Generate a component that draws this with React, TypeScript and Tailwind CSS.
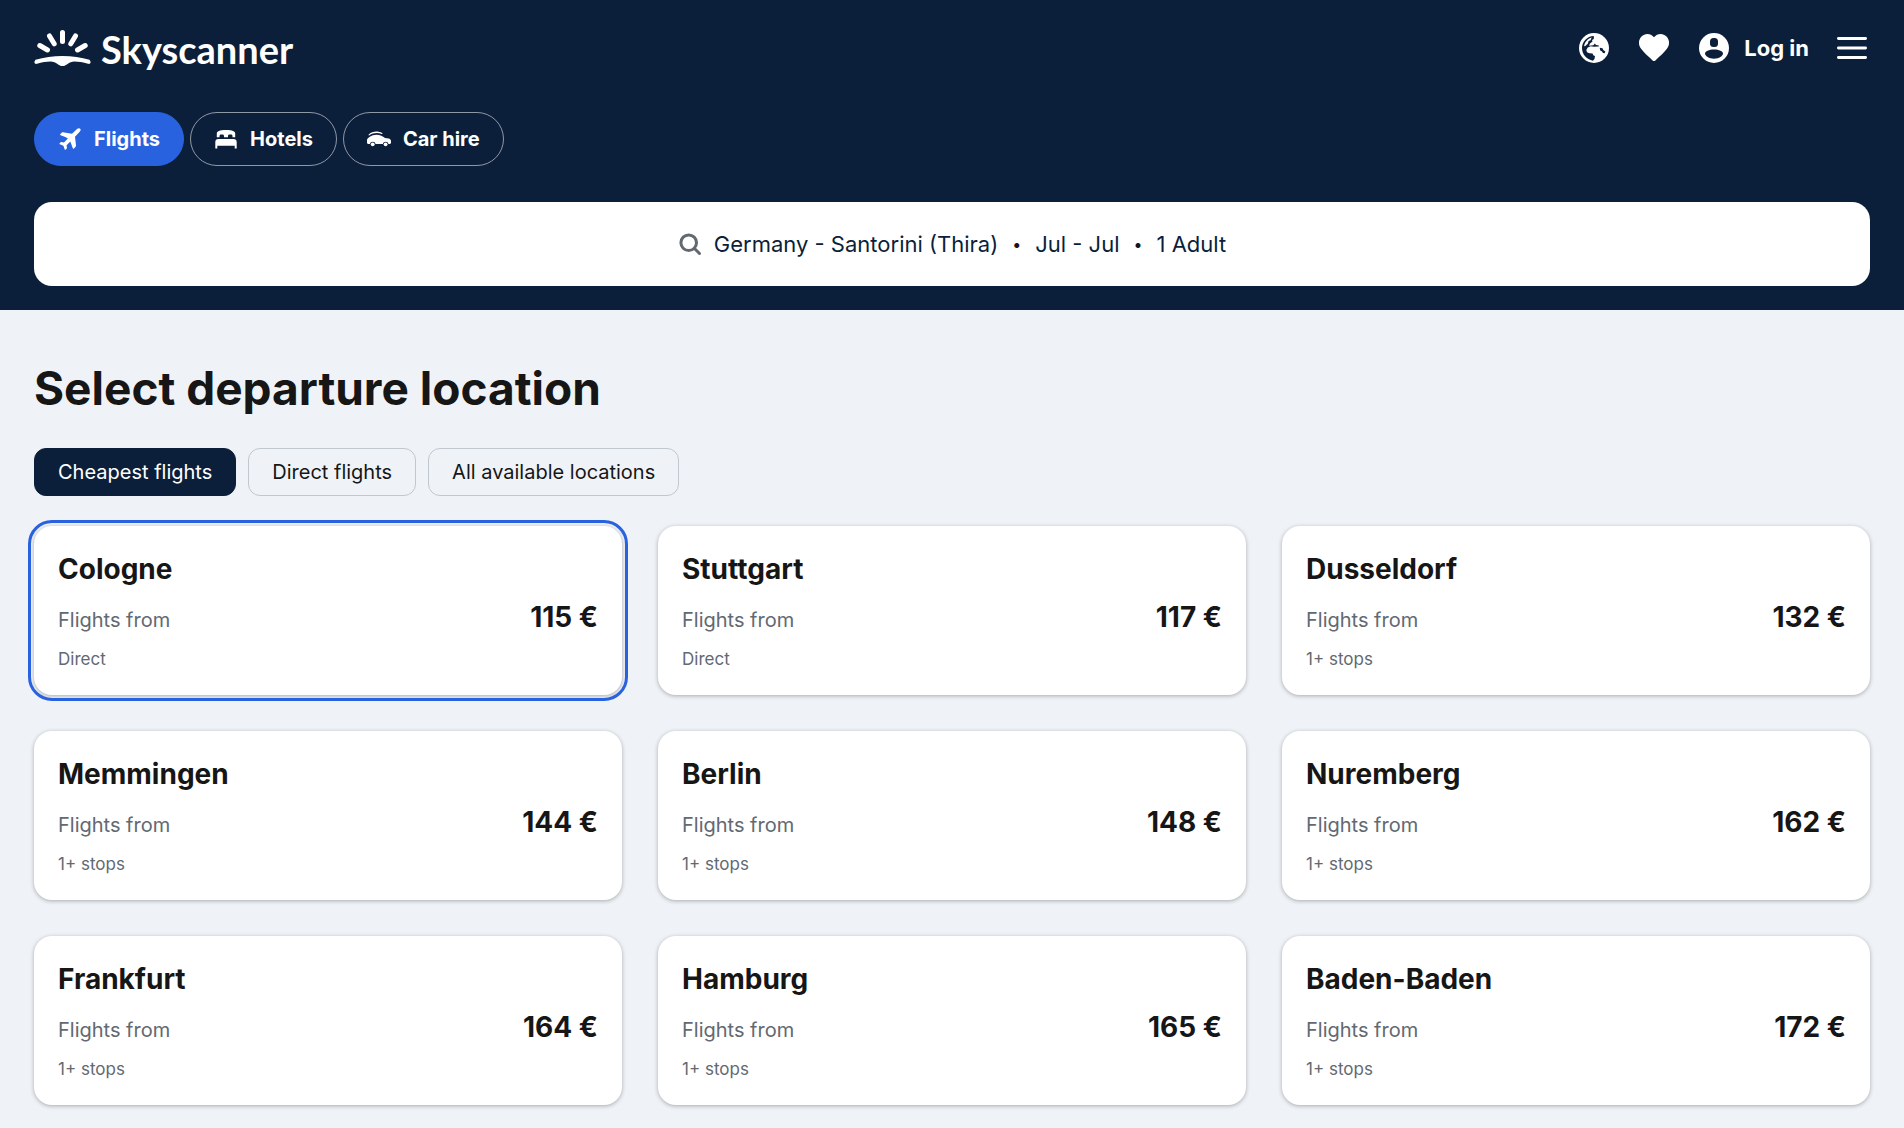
import React from "react";
import clsx from "clsx";

type Tab = { label: string; icon: React.ReactNode; active?: boolean };

type Departure = { city: string; price: number; stops: string };

const PlaneIcon = () => (
    <svg viewBox="0 0 24 24" className="w-6 h-6" fill="currentColor" aria-hidden="true">
        <path d="M22.200 1.700c.7.700.5 1.700-.3 2.700l-4.900 5.400 1 8.800c0 .5-.1.900-.4 1.200l-1.600 1.600c-.4.400-1 .3-1.200-.2l-2.500-6.700-3.700 3.800.3 2.700c0 .3-.1.600-.3.800l-.8.800c-.4.400-.9.300-1.100-.2L5.400 18.700l-3.500-1.400c-.5-.2-.6-.8-.2-1.100l.8-.8c.2-.2.500-.3.800-.3l2.700.3 3.900-3.900-2.600-1.400-4.700-1.900c-.5-.2-.6-.8-.2-1.200l1.300-1.300c.3-.3.700-.5 1.200-.4l9.100 1.400 5.300-4.900c.9-.8 2.200-.8 2.900-.1z" />
    </svg>
);

const BedIcon = () => (
    <svg viewBox="0 0 24 24" className="w-6 h-6" fill="currentColor" aria-hidden="true">
        <path d="M2.800 10.300V6.500C2.800 4.300 5.500 3 12 3s9.200 1.300 9.200 3.500v3.800h-2.700V9c0-.9-.6-1.500-1.500-1.500h-1.600c-.8 0-1.400.6-1.400 1.500v1.300h-4V9c0-.9-.6-1.500-1.400-1.500H7c-.9 0-1.500.6-1.500 1.500v1.300z" />
        <path d="M4.500 12h15a3.200 3.200 0 0 1 3.200 3.200v6.300h-2v-2.800H3.300v2.800h-2v-6.300A3.200 3.200 0 0 1 4.500 12z" />
    </svg>
);

const CarIcon = () => (
    <svg viewBox="0 0 24 24" className="w-6 h-6" fill="currentColor" aria-hidden="true">
        <path d="M1.300 8c3-2.900 6.500-3.800 10.200-3.200 1.700.2 3.100.8 4.300 1.700l-1 .5c-4-1.500-8.500-1.400-12.700 1.400z" />
        <path d="M2.500 10c3.500-2.400 8-2.900 11.800-1.200 1.300.6 2.500 1.300 3.700 2.100l3.500.6c1.600.3 2.500 1.200 2.500 2.600v1.700c0 .7-.5 1.200-1.200 1.200h-1.300a2.900 2.900 0 0 0-5.700 0H8.600a2.900 2.900 0 0 0-5.700 0H1.200C.5 17 0 16.500 0 15.800v-2.400C0 11.800 1 10.800 2.500 10z" />
        <circle cx="5.700" cy="17.300" r="1.900" />
        <circle cx="18.600" cy="17.300" r="1.900" />
    </svg>
);

const GlobeIcon = () => (
    <svg viewBox="0 0 30 30" className="w-[30px] h-[30px]" aria-hidden="true">
        <circle cx="15" cy="15" r="15" fill="#fff" />
        <path d="M14.800 3v3l-1.800 1 .5 1.500-2.500 2-1 2.200 4.500-.4 1.200-1.800 1.300 1.600 2.800.3v1.200l-5 .2-3-.5-3 1.200-1.500 2.500.7 2.300 2.500 1 3 .2 1 1.900 1.500.6-.5 3-1.500 1.800C7.500 26.300 3 21.200 3 15S8.200 3.200 14.800 3z" fill="#0c1f3a" />
        <path d="M12.700 4.600 11.500 7.200 9.600 8l-.8 2.800L6.300 13l-1.200.2c.8-4.300 3.700-7.400 7.600-8.600z" fill="#fff" />
        <path d="m20.700 14.700 2.800.5.8 1.800 2 1.500-.6 1.700-1.700-.2-1.200-1.800-1.600-.8z" fill="#0c1f3a" />
    </svg>
);

const HeartIcon = () => (
    <svg viewBox="0 0 30 30" className="w-[30px] h-[30px]" fill="currentColor" aria-hidden="true">
        <path d="M15 4.300C18 .3 24-.3 27.500 3.500c3.400 3.700 3.200 8.500.4 12.300-2.700 3.700-7 7.500-11.500 11.600-.9.800-1.900.8-2.800 0C9.100 23.300 4.800 19.500 2.100 15.800-.7 12-.9 7.200 2.500 3.500 6-.3 12 .3 15 4.300z" />
    </svg>
);

const AccountIcon = () => (
    <svg viewBox="0 0 30 30" className="w-[30px] h-[30px]" aria-hidden="true">
        <circle cx="15" cy="15" r="15" fill="#fff" />
        <rect x="11" y="5" width="8" height="9" rx="3.500" fill="#0c1f3a" />
        <path d="M6 20.500c0-2.300 4-4 9-4s9 1.700 9 4-4 5.200-9 5.200-9-2.900-9-5.200z" fill="#0c1f3a" />
    </svg>
);

const MenuIcon = () => (
    <svg viewBox="0 0 30 30" className="w-[30px] h-[30px]" stroke="currentColor" strokeWidth="2.800" strokeLinecap="round" aria-hidden="true">
        <path d="M1.400 5.500h27.200M1.400 15h27.200M1.400 24.500h27.200" />
    </svg>
);

const SearchIcon = () => (
    <svg viewBox="0 0 24 24" className="w-6 h-6 text-[#626971]" fill="none" stroke="currentColor" strokeWidth="3" strokeLinecap="round" aria-hidden="true">
        <circle cx="10.700" cy="10.700" r="7.800" />
        <path d="m16.500 16.500 5 5" />
    </svg>
);

const SunriseMark = () => (
    <svg viewBox="0 0 57 36" className="w-[57px] h-9" fill="none" stroke="#fff" strokeWidth="5" strokeLinecap="round" aria-hidden="true">
        <path d="M28.500 2.500v9M15.500 6l4.700 7.800M41.500 6l-4.700 7.800M5.800 15.500l7.700 4.500M51.200 15.500l-7.700 4.500" />
        <path d="M1.500 29.800c16.500-5.200 37.500-5.200 54 0l1.200 2.200c-.3 1.700-1.300 2.200-2.700 1.800-5-1.500-9.500-2.200-13.500-2.200-3 0-5 1-7 2.500-2 1.300-3 2-5 2s-3-.7-5-2c-2-1.500-4-2.500-7-2.500-4 0-8.500.7-13.500 2.200C1.600 34.200.6 33.700.3 32z" fill="#fff" stroke="none" />
    </svg>
);

const tabs: Tab[] = [
    { label: "Flights", icon: <PlaneIcon />, active: true },
    { label: "Hotels", icon: <BedIcon /> },
    { label: "Car hire", icon: <CarIcon /> },
];

const filters = ["Cheapest flights", "Direct flights", "All available locations"];

const departures: Departure[] = [
    { city: "Cologne", price: 115, stops: "Direct" },
    { city: "Stuttgart", price: 117, stops: "Direct" },
    { city: "Dusseldorf", price: 132, stops: "1+ stops" },
    { city: "Memmingen", price: 144, stops: "1+ stops" },
    { city: "Berlin", price: 148, stops: "1+ stops" },
    { city: "Nuremberg", price: 162, stops: "1+ stops" },
    { city: "Frankfurt", price: 164, stops: "1+ stops" },
    { city: "Hamburg", price: 165, stops: "1+ stops" },
    { city: "Baden-Baden", price: 172, stops: "1+ stops" },
];

function Header() {
    return (
        <header className="bg-[#0c1f3a] px-[34px] pb-6 text-white">
            <div className="flex h-24 items-center justify-between">
                <a href="#" className="flex items-center gap-[10px]" aria-label="Skyscanner">
                    <SunriseMark />
                    <span className="pt-0.5 font-['Lato',sans-serif] text-[38px] leading-10 font-bold">Skyscanner</span>
                </a>
                <nav className="flex items-center">
                    <button aria-label="Regional settings" className="mr-[30px]">
                        <GlobeIcon />
                    </button>
                    <button aria-label="Saved" className="mr-[30px]">
                        <HeartIcon />
                    </button>
                    <button className="mr-7 flex items-center gap-[15px] text-[22px] leading-7 font-bold">
                        <AccountIcon />
                        Log in
                    </button>
                    <button aria-label="Menu" className="mr-[3px]">
                        <MenuIcon />
                    </button>
                </nav>
            </div>

            <nav className="mt-4 flex gap-[6px]">
                {tabs.map((tab) => (
                    <a
                        key={tab.label}
                        href="#"
                        className={clsx(
                            "flex h-[54px] items-center gap-3 rounded-full border px-[23px] text-xl font-bold",
                            tab.active ? "border-[#2862de] bg-[#2862de]" : "border-[#8f98a5]"
                        )}
                    >
                        {tab.icon}
                        {tab.label}
                    </a>
                ))}
            </nav>

            <button className="mt-9 flex h-[84px] w-full items-center justify-center gap-3 rounded-[18px] bg-white text-[22px] text-[#0c1f3a]">
                <SearchIcon />
                <span className="flex items-center gap-[14px]">
                    <span>Germany - Santorini (Thira)</span>
                    <span className="text-base text-[#161616]">•</span>
                    <span>Jul - Jul</span>
                    <span className="text-base text-[#161616]">•</span>
                    <span>1 Adult</span>
                </span>
            </button>
        </header>
    );
}

function DepartureCard({ departure, selected }: { departure: Departure; selected: boolean }) {
    return (
        <a
            href="#"
            className={clsx(
                "block rounded-[18px] bg-white px-6 pt-[25px] pb-[23px] shadow-[0_1px_4px_rgba(0,0,0,0.3)]",
                selected && "outline-3 outline-offset-3 outline-[#2862de]"
            )}
        >
            <h2 className="text-[28px] leading-9 font-bold">{departure.city}</h2>
            <div className="mt-3 flex items-baseline justify-between">
                <span className="text-xl leading-9 text-[#626971]">Flights from</span>
                <span className="text-[28px] leading-9 font-bold">{departure.price} €</span>
            </div>
            <p className="mt-2 text-[17px] leading-[26px] text-[#626971]">{departure.stops}</p>
        </a>
    );
}

export default function App() {
    return (
        <div className="min-h-screen bg-[#eff3f8] font-['Inter',sans-serif] text-[#161616]">
            <Header />
            <main className="px-[34px] pt-12 pb-6">
                <h1 className="text-[46px] leading-[60px] font-bold">Select departure location</h1>
                <div className="mt-[30px] flex gap-3">
                    {filters.map((filter, i) => (
                        <button
                            key={filter}
                            className={clsx(
                                "h-12 rounded-xl border px-[23px] text-xl",
                                i === 0 ? "border-[#0c1f3a] bg-[#0c1f3a] text-white" : "border-[#c1c7cf]"
                            )}
                        >
                            {filter}
                        </button>
                    ))}
                </div>
                <div className="mt-[30px] grid grid-cols-3 gap-9">
                    {departures.map((departure, i) => (
                        <DepartureCard key={departure.city} departure={departure} selected={i === 0} />
                    ))}
                </div>
            </main>
        </div>
    );
}
